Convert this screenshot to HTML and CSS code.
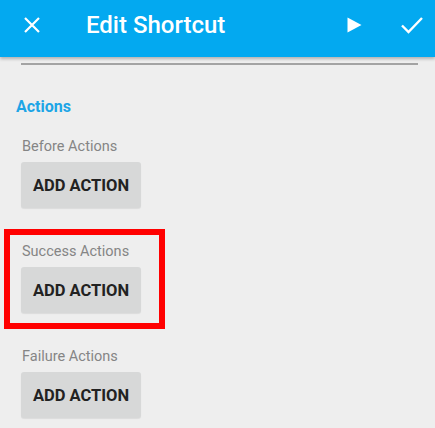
FILE: index.html
```html
<!DOCTYPE html>
<html lang="en">
<head>
    <meta charset="UTF-8">
    <meta name="viewport" content="width=device-width, initial-scale=1.0">
    <title>Edit Shortcut</title>
    <link rel="stylesheet" href="styles.css">
</head>
<body>
    <div class="app-bar">
        <button class="icon-btn close-btn" aria-label="Close">
            <svg width="18" height="18" viewBox="0 0 18 18"><path d="M2 2 L16 16 M16 2 L2 16" stroke="#fff" stroke-width="2.2" fill="none"/></svg>
        </button>
        <h1>Edit Shortcut</h1>
        <div class="bar-actions">
            <button class="icon-btn" aria-label="Run">
                <svg width="16" height="16" viewBox="0 0 16 16"><path d="M1.5 0.5 L15.5 8 L1.5 15.5 Z" fill="#fff"/></svg>
            </button>
            <button class="icon-btn" aria-label="Save">
                <svg width="24" height="20" viewBox="0 0 24 20"><path d="M2 10.5 L8.5 17 L22 3" stroke="#fff" stroke-width="2.4" fill="none"/></svg>
            </button>
        </div>
    </div>

    <div class="content">
        <hr class="divider">

        <h2 class="section-title">Actions</h2>

        <div class="action-group">
            <p class="group-label">Before Actions</p>
            <button class="add-btn">ADD ACTION</button>
        </div>

        <div class="action-group highlighted">
            <p class="group-label">Success Actions</p>
            <button class="add-btn">ADD ACTION</button>
        </div>

        <div class="action-group">
            <p class="group-label">Failure Actions</p>
            <button class="add-btn">ADD ACTION</button>
        </div>
    </div>
</body>
</html>
```

FILE: styles.css
```css
body {
    font-family: Roboto, "Liberation Sans", sans-serif;
    margin: 0;
    padding: 0;
    background-color: #eeeeee;
    overflow: hidden;
}
.app-bar {
    background-color: #03a9f0;
    height: 57px;
    box-sizing: border-box;
    display: flex;
    align-items: center;
    padding: 0 11px 8px 23px;
    box-shadow: 0 2px 3px rgba(0,0,0,0.25);
    position: relative;
}
.icon-btn {
    background: none;
    border: none;
    padding: 0;
    display: flex;
    align-items: center;
    cursor: pointer;
}
.close-btn {
    margin-top: 1px;
}
.app-bar h1 {
    margin: 0 0 0 45px;
    color: white;
    font-size: 24px;
    font-weight: 500;
    line-height: 28px;
    flex-grow: 1;
}
.bar-actions {
    display: flex;
    align-items: center;
    gap: 38px;
}
.content {
    padding: 6px 0 0 21px;
}
.divider {
    border: none;
    border-top: 2px solid #a3a3a3;
    margin: 0 17px 0 0;
}
.section-title {
    margin: 32px 0 0 -5px;
    color: #1da5e6;
    font-size: 16px;
    font-weight: 700;
    line-height: 20px;
}
.action-group {
    padding-top: 22px;
    padding-bottom: 12px;
    position: relative;
}
.action-group:first-of-type {
    padding-top: 20px;
}
.group-label {
    margin: 0 0 5px 1px;
    color: #858585;
    font-size: 14.5px;
    line-height: 20px;
}
.add-btn {
    display: block;
    width: 120px;
    height: 46px;
    background-color: #d7d8d8;
    border: none;
    border-radius: 3px;
    box-shadow: 0 1px 1px rgba(0,0,0,0.08);
    color: #222222;
    font-family: Roboto, "Liberation Sans", sans-serif;
    font-size: 16.5px;
    font-weight: 700;
    padding: 0;
    cursor: pointer;
}
/* red annotation box drawn over the success group */
.highlighted::after {
    content: "";
    position: absolute;
    left: -17px;
    top: 9px;
    width: 161px;
    height: 100px;
    border: 6px solid #ff0000;
    box-sizing: border-box;
    pointer-events: none;
}
```
